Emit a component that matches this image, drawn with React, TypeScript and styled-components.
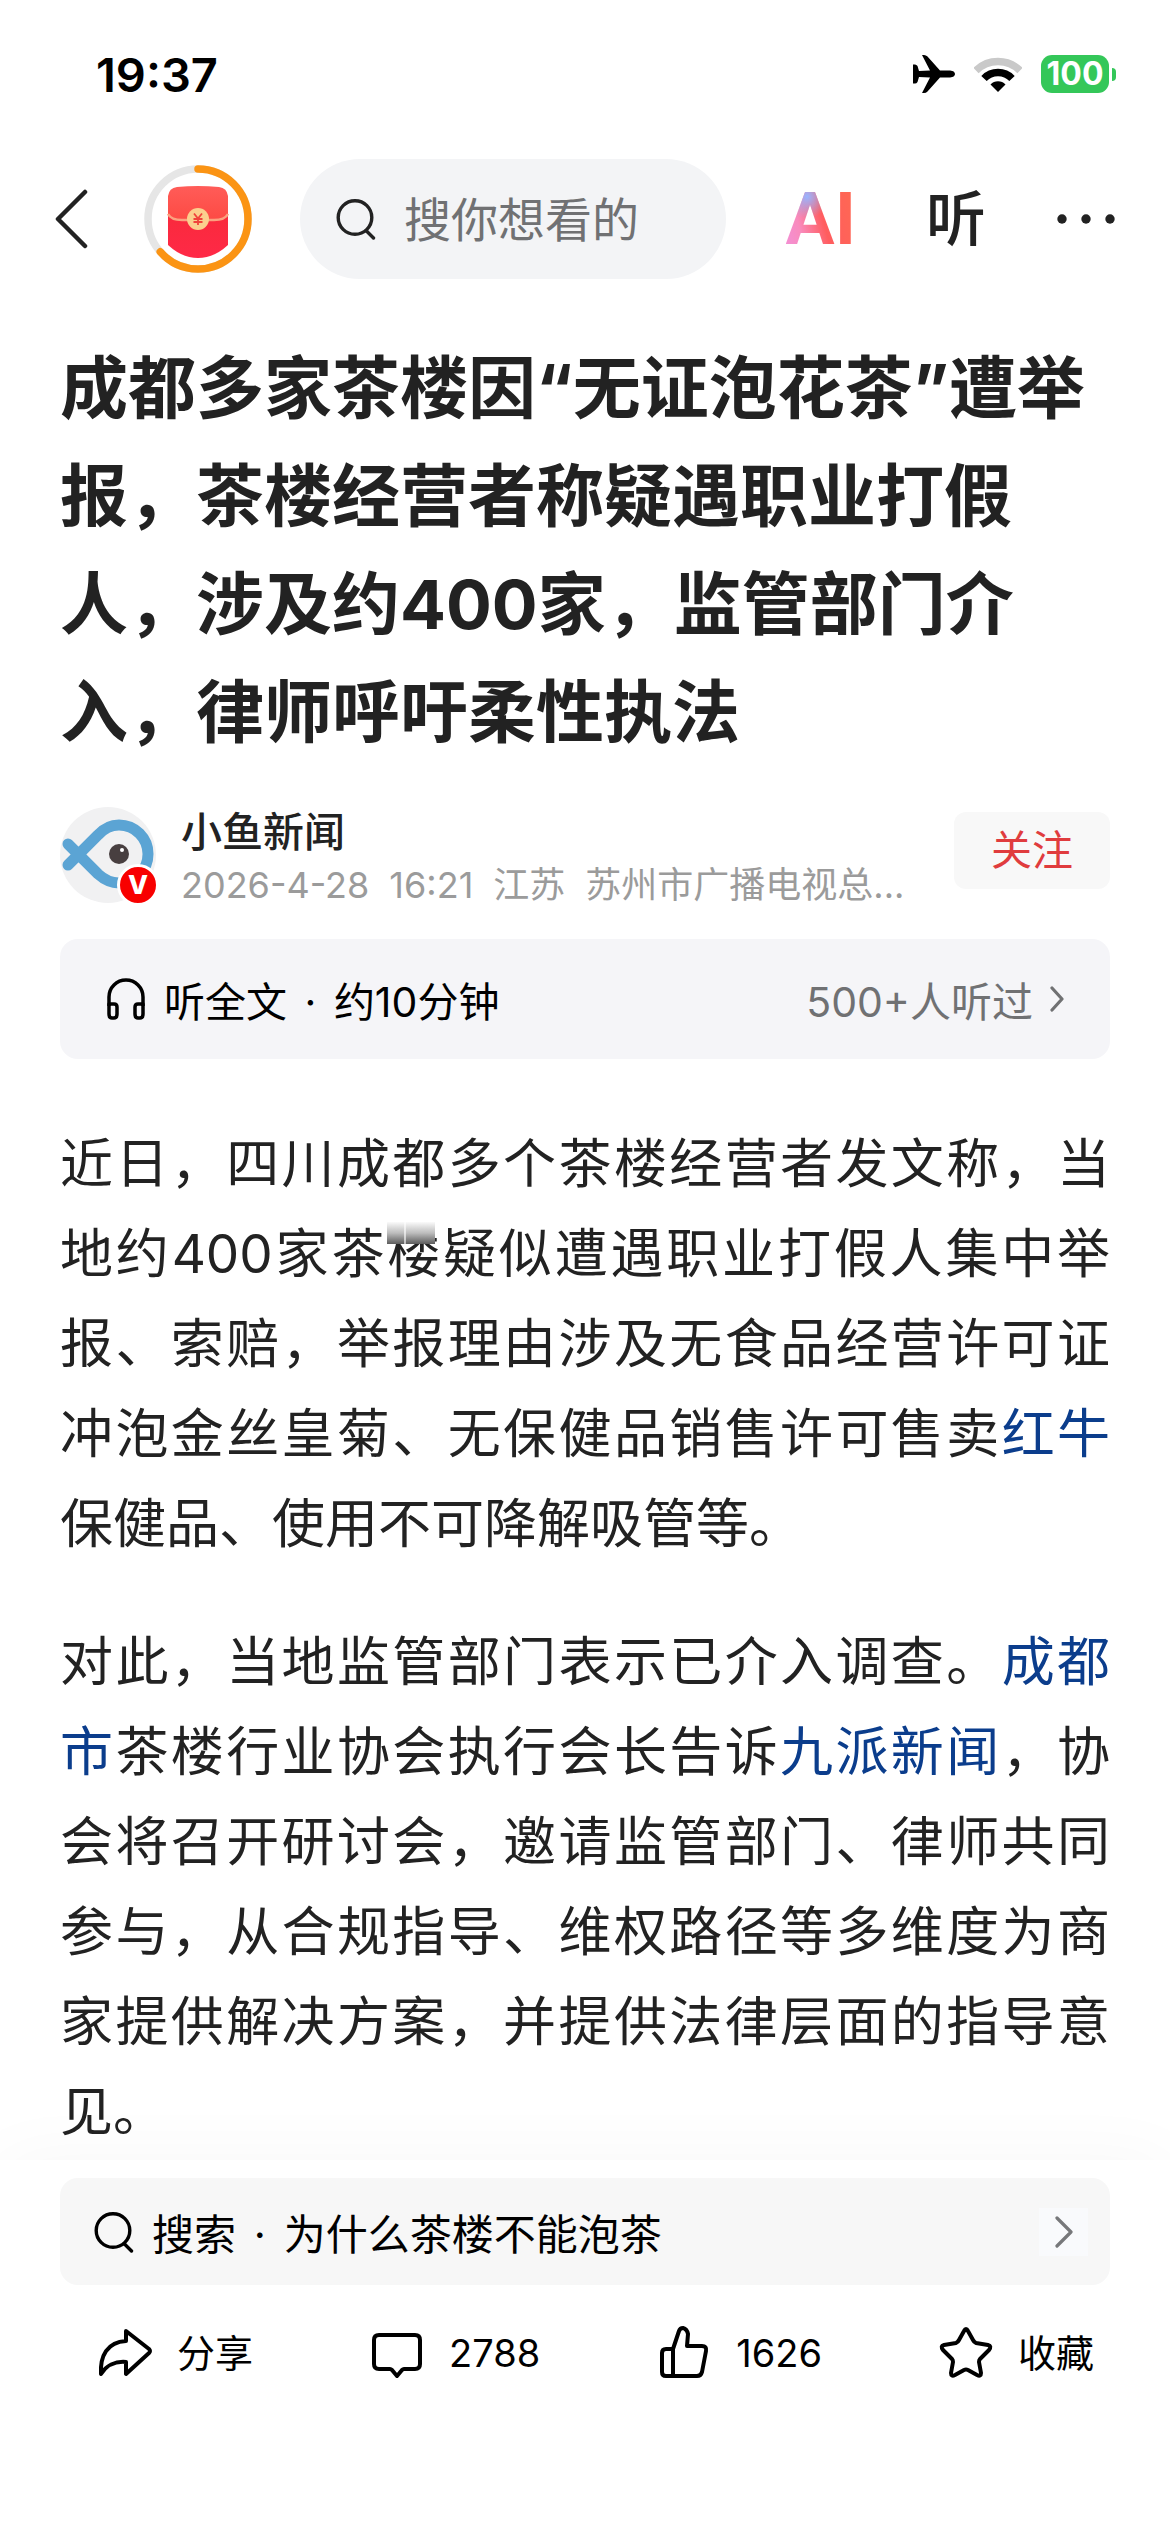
import React from "react";
import styled, { createGlobalStyle } from "styled-components";

const GlobalStyle = createGlobalStyle`
  *, *::before, *::after { box-sizing: border-box; }
  body {
    margin: 0;
    background: #fff;
    color: #222;
    font-family: Inter, "Noto Sans CJK SC", sans-serif;
    text-spacing-trim: space-all;
  }
  h1, p { margin: 0; }
  button {
    border: 0;
    padding: 0;
    background: none;
    color: inherit;
    font: inherit;
    cursor: pointer;
  }
  svg { display: block; flex: none; }
`;

const Page = styled.div`
  display: flex;
  flex-direction: column;
  min-height: 100vh;
`;

const StatusBar = styled.div`
  display: flex;
  align-items: center;
  justify-content: space-between;
  height: 148px;
  padding: 0 54px 0 96px;
  color: #000;
`;

const Clock = styled.time`
  font-size: 47px;
  font-weight: 600;
`;

const StatusIcons = styled.div`
  display: flex;
  align-items: center;
  gap: 19px;
`;

const Battery = styled.div`
  display: flex;
  align-items: center;
  gap: 3px;
  &::after {
    content: "";
    width: 4px;
    height: 13px;
    border-radius: 0 4px 4px 0;
    background: #34c759;
  }
`;

const BatteryLevel = styled.span`
  width: 68px;
  border-radius: 11px;
  background: #34c759;
  color: #fff;
  font-size: 32px;
  font-weight: 700;
  line-height: 38px;
  text-align: center;
`;

const NavBar = styled.header`
  display: flex;
  align-items: center;
  height: 142px;
  padding: 0 54px;
`;

const Reward = styled.button`
  margin: 0 48px 0 56px;
`;

const SearchField = styled.label`
  display: flex;
  flex: 1;
  align-items: center;
  gap: 28px;
  min-width: 0;
  height: 120px;
  padding: 0 36px;
  border-radius: 60px;
  background: #f3f4f6;
`;

const SearchInput = styled.input`
  flex: 1;
  min-width: 0;
  padding: 0;
  border: 0;
  outline: 0;
  background: none;
  color: #222;
  font: inherit;
  font-size: 47px;
  &::placeholder { color: #707173; opacity: 1; }
`;

const NavActions = styled.div`
  display: flex;
  align-items: center;
  gap: 70px;
  padding-left: 60px;
`;

const AiButton = styled.button`
  && {
    background:
      radial-gradient(circle at 30% 22%, #98b4ff 0, rgba(152, 180, 255, 0) 22px),
      linear-gradient(75deg, #f48fd0 8%, #f98bbd 24%, #ff5d5f 52%, #ff6a50 100%);
    background-clip: text;
    -webkit-background-clip: text;
    color: transparent;
    font-family: Roboto, sans-serif;
    font-size: 73px;
    font-weight: 700;
    line-height: 80px;
  }
`;

const ListenButton = styled.button`
  && {
    font-size: 60px;
    font-weight: 500;
    line-height: 80px;
  }
`;

const Article = styled.main`
  padding: 44px 60px 3px;
`;

const Title = styled.h1`
  font-size: 68px;
  font-weight: 700;
  line-height: 108px;
`;

const Author = styled.div`
  display: flex;
  align-items: flex-start;
  margin-top: 41px;
`;

const Avatar = styled.div`
  position: relative;
  flex: none;
`;

const Verified = styled.span`
  position: absolute;
  right: -3px;
  bottom: -3px;
  width: 42px;
  height: 42px;
  border: 3px solid #fff;
  border-radius: 50%;
  background: #f80000;
  color: #fff;
  font-size: 26px;
  font-weight: 800;
  line-height: 36px;
  text-align: center;
`;

const AuthorInfo = styled.div`
  flex: 1;
  min-width: 0;
  padding-left: 25px;
`;

const AuthorName = styled.div`
  font-size: 41px;
  font-weight: 500;
  line-height: 50px;
`;

const Meta = styled.div`
  display: flex;
  gap: 20px;
  margin-top: 6px;
  color: #9b9b9b;
  font-size: 36px;
  line-height: 44px;
  white-space: nowrap;
`;

const FollowButton = styled.button`
  && {
    width: 156px;
    margin-top: 5px;
    border-radius: 12px;
    background: #f8f8f8;
    color: #e03c3e;
    font-size: 41px;
    line-height: 77px;
  }
`;

const ListenBar = styled.button`
  && {
    display: flex;
    align-items: center;
    width: 100%;
    height: 120px;
    margin-top: 32px;
    padding: 0 46px;
    border-radius: 18px;
    background: #f5f5f8;
    color: #000;
    font-size: 41px;
  }
`;

const ListenLabel = styled.span`
  flex: 1;
  padding-left: 18px;
  text-align: left;
`;

const Dot = styled.span`
  margin: 0 6px;
  white-space: pre;
`;

const ListenCount = styled.span`
  margin-right: 17px;
  color: #707173;
`;

const Body = styled.div`
  display: flex;
  flex-direction: column;
  gap: 48px;
  margin-top: 60px;
  font-size: 53px;
  line-height: 90px;
  text-align: justify;
`;

const Entity = styled.a`
  color: #0b3d8c;
  text-decoration: none;
`;

const Smudge = styled.span`
  position: relative;
  &::before {
    content: "";
    position: absolute;
    top: 0;
    left: 0;
    width: 48px;
    height: 22px;
    background:
      linear-gradient(90deg, transparent 17px, rgba(255, 255, 255, 0.6) 17px 19px, transparent 19px),
      linear-gradient(#fafafa, #bdbdbd 50%, #5c5c5c);
  }
`;

const Footer = styled.footer`
  position: relative;
  flex: 1;
  padding: 18px 60px 120px;
  background: #fff;
  box-shadow: 0 0 70px rgba(0, 0, 0, 0.035);
  color: #000;
`;

const RelatedSearch = styled.button`
  && {
    display: flex;
    align-items: center;
    width: 100%;
    height: 107px;
    padding: 0 22px 0 34px;
    border-radius: 18px;
    background: #f7f7f7;
    font-size: 42px;
  }
`;

const RelatedLabel = styled.span`
  flex: 1;
  padding-left: 18px;
  text-align: left;
`;

const ChevronBox = styled.span`
  display: grid;
  place-items: center;
  width: 49px;
  height: 48px;
  background: #f9fafc;
`;

const Actions = styled.div`
  display: flex;
  justify-content: space-between;
  margin-top: 40px;
  padding: 0 16px 0 37px;
`;

const Action = styled.button`
  && {
    display: flex;
    align-items: center;
    gap: 24px;
    font-size: 38px;
    line-height: 56px;
  }
`;

const Magnifier = ({ color }: { color: string }) => (
  <svg width="40" height="42" viewBox="0 0 40 42" fill="none" stroke={color} strokeWidth="3.4" strokeLinecap="round">
    <circle cx="19" cy="19.500" r="16.800" />
    <path d="M30.500 33 L37.500 40" />
  </svg>
);

const ActionIcon = ({ d }: { d: string }) => (
  <svg width="56" height="56" viewBox="0 0 56 56" fill="none" stroke="#000" strokeWidth="4" strokeLinejoin="round" strokeLinecap="round">
    <path d={d} />
  </svg>
);

const actions = [
  { label: "分享", d: "M29 6 L52 24 Q54 26 52 28 L29 49 V37 C18 36 9 41 4 49 C3 31 10 17 29 16 Z" },
  {
    label: "2788",
    d: "M10 10 H46 Q51 10 51 15 V39 Q51 44 46 44 H35 Q34 44 33 45 L28 51 L23 45 Q22 44 21 44 H10 Q5 44 5 39 V15 Q5 10 10 10 Z",
  },
  {
    label: "1626",
    d: "M17 24 V51 M17 24 H10 Q6 24 6 28 V47 Q6 51 10 51 H41 Q45 51 46 47 L50 26 Q51 21 46 21 H31 L32 9 Q31 4 27 3 Q24 3 23 6 L17 24",
  },
  {
    label: "收藏",
    d: "M26 6 Q28 2 30 6 L35 15 Q36 17 38 18 L50 20 Q54 21 51 25 L42 34 Q41 35 41 37 L43 48 Q43 52 39 50 L30 45 Q28 44 26 45 L17 50 Q13 52 13 48 L15 37 Q15 35 14 34 L5 25 Q2 21 6 20 L18 18 Q20 17 21 15 Z",
  },
];

export default function App() {
  return (
    <Page>
      <GlobalStyle />
      <StatusBar>
        <Clock>19:37</Clock>
        <StatusIcons>
          <svg width="42" height="38" viewBox="0 0 42 38">
            <path d="M42 19 C42 21.500 39 22.500 36 22.500 H27 L14.500 36.500 Q13 38 11 38 H9 L17 22.500 L6 22 L4.500 27 Q3.500 28.500 2 28.500 H0 V9.500 H2 Q3.500 9.500 4.500 11 L6 16 L17 15.500 L9 0 H11 Q13 0 14.500 1.500 L27 15.500 H36 C39 15.500 42 16.500 42 19 Z" />
          </svg>
          <svg width="48" height="37" viewBox="0 0 48 37" fill="none">
            <path d="M2 14.500 A31.500 31.500 0 0 1 46 14.500" stroke="#c9c9c9" strokeWidth="7.500" />
            <path d="M10 22.500 A19.500 19.500 0 0 1 38 22.500" stroke="#000" strokeWidth="7.500" />
            <path d="M24 36 L16.500 28.500 A10.500 10.500 0 0 1 31.500 28.500 Z" fill="#000" />
          </svg>
          <Battery>
            <BatteryLevel>100</BatteryLevel>
          </Battery>
        </StatusIcons>
      </StatusBar>

      <NavBar>
        <button aria-label="返回">
          <svg width="34" height="62" viewBox="0 0 34 62" fill="none" stroke="#222" strokeWidth="4.500" strokeLinecap="round" strokeLinejoin="round">
            <path d="M31 4 L4 31 L31 58" />
          </svg>
        </button>
        <Reward aria-label="红包">
          <svg width="108" height="108" viewBox="0 0 108 108" fill="none">
            <defs>
              <linearGradient id="flap" x1="0" y1="0" x2="0" y2="1">
                <stop offset="0" stopColor="#ff5c58" />
                <stop offset="1" stopColor="#fd4a44" />
              </linearGradient>
              <linearGradient id="pocket" x1="0" y1="0" x2="0" y2="1">
                <stop offset="0" stopColor="#f92a3c" />
                <stop offset="1" stopColor="#ff2947" />
              </linearGradient>
            </defs>
            <circle cx="54" cy="54" r="50" stroke="#e6e6e6" strokeWidth="7.500" />
            <circle cx="54" cy="54" r="50" stroke="#fb9414" strokeWidth="7.500" strokeLinecap="round" pathLength="360" strokeDasharray="229 360" transform="rotate(-90 54 54)" />
            <path d="M24 50 H84 V80 Q70 93 54 93 Q38 93 24 80 Z" fill="url(#pocket)" />
            <path d="M24 31 Q25 23 33 22 Q54 20 75 22 Q83 23 84 31 V49 Q82 55 71 55 H37 Q26 55 24 49 Z" fill="url(#flap)" />
            <path d="M24 49 Q27 55 38 55 H70 Q81 55 84 49" stroke="#fba17f" strokeWidth="2.500" />
            <circle cx="54" cy="54" r="11" fill="#fbcf8e" />
            <path d="M50 48.500 L54 53.500 L58 48.500 M54 53.500 V60 M49.500 54 H58.500 M49.500 57 H58.500" stroke="#f0433c" strokeWidth="1.800" />
          </svg>
        </Reward>
        <SearchField>
          <Magnifier color="#222" />
          <SearchInput type="text" aria-label="搜索" placeholder="搜你想看的" />
        </SearchField>
        <NavActions>
          <AiButton>AI</AiButton>
          <ListenButton>听</ListenButton>
          <button aria-label="更多">
            <svg width="60" height="12" viewBox="0 0 60 12" fill="#222">
              <circle cx="6" cy="6" r="4.700" />
              <circle cx="30" cy="6" r="4.700" />
              <circle cx="54" cy="6" r="4.700" />
            </svg>
          </button>
        </NavActions>
      </NavBar>

      <Article>
        <Title>
          成都多家茶楼因“无证泡花茶”遭举报，茶楼经营者称疑遇职业打假人，涉及约400家，监管部门介入，律师呼吁柔性执法
        </Title>

        <Author>
          <Avatar>
            <svg width="96" height="96" viewBox="0 0 96 96" fill="none">
              <circle cx="48" cy="48" r="48" fill="#f1f1f2" />
              <path d="M8 37 L38 67 Q48 76 59 76 A29 29 0 0 0 59 18 Q47 18 38 28 L8 58" stroke="#5ba4d4" strokeWidth="11" strokeLinecap="round" />
              <circle cx="59" cy="47" r="10" fill="#483f40" />
              <circle cx="62" cy="43" r="2" fill="#fff" />
            </svg>
            <Verified>V</Verified>
          </Avatar>
          <AuthorInfo>
            <AuthorName>小鱼新闻</AuthorName>
            <Meta>
              <span>2026-4-28</span>
              <span>16:21</span>
              <span>江苏</span>
              <span>苏州市广播电视总...</span>
            </Meta>
          </AuthorInfo>
          <FollowButton>关注</FollowButton>
        </Author>

        <ListenBar>
          <svg width="40" height="42" viewBox="0 0 40 42" fill="none" stroke="#000" strokeWidth="3.500" strokeLinejoin="round">
            <path d="M3 28 V19 A17 17 0 0 1 37 19 V28" />
            <path d="M3 26 H8 Q11 26 11 29 V36 Q11 40 8 40 H6 Q3 40 3 36 Z" />
            <path d="M37 26 H32 Q29 26 29 29 V36 Q29 40 32 40 H34 Q37 40 37 36 Z" />
          </svg>
          <ListenLabel>
            听全文<Dot> · </Dot>约10分钟
          </ListenLabel>
          <ListenCount>500+人听过</ListenCount>
          <svg width="14" height="26" viewBox="0 0 14 26" fill="none" stroke="#707173" strokeWidth="3.200" strokeLinecap="round" strokeLinejoin="round">
            <path d="M2 2 L12 13 L2 24" />
          </svg>
        </ListenBar>

        <Body>
          <p>
            近日，四川成都多个茶楼经营者发文称，当地约400家茶<Smudge>楼</Smudge>疑似遭遇职业打假人集中举报、索赔，举报理由涉及无食品经营许可证冲泡金丝皇菊、无保健品销售许可售卖<Entity href="#redbull">红牛</Entity>保健品、使用不可降解吸管等。
          </p>
          <p>
            对此，当地监管部门表示已介入调查。<Entity href="#chengdu">成都市</Entity>茶楼行业协会执行会长告诉<Entity href="#jiupai">九派新闻</Entity>，协会将召开研讨会，邀请监管部门、律师共同参与，从合规指导、维权路径等多维度为商家提供解决方案，并提供法律层面的指导意见。
          </p>
        </Body>
      </Article>

      <Footer>
        <RelatedSearch>
          <Magnifier color="#000" />
          <RelatedLabel>
            搜索<Dot> · </Dot>为什么茶楼不能泡茶
          </RelatedLabel>
          <ChevronBox>
            <svg width="20" height="32" viewBox="0 0 20 32" fill="none" stroke="#77787a" strokeWidth="3.200" strokeLinecap="round" strokeLinejoin="round">
              <path d="M3 2 L17 16 L3 30" />
            </svg>
          </ChevronBox>
        </RelatedSearch>
        <Actions>
          {actions.map((a) => (
            <Action key={a.label}>
              <ActionIcon d={a.d} />
              <span>{a.label}</span>
            </Action>
          ))}
        </Actions>
      </Footer>
    </Page>
  );
}
